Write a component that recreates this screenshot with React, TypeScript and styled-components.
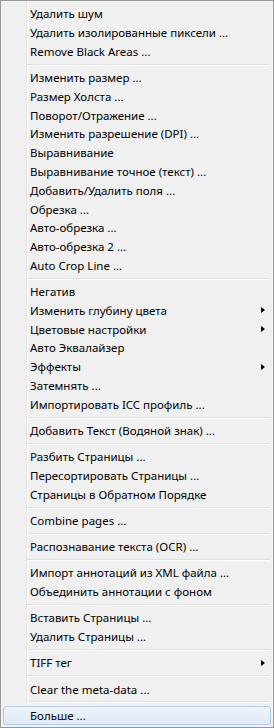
import React from 'react'
import styled, { createGlobalStyle } from 'styled-components'

type Entry = { label: string; submenu?: boolean; active?: boolean }

const groups: Entry[][] = [
  [
    { label: 'Удалить шум' },
    { label: 'Удалить изолированные пиксели ...' },
    { label: 'Remove Black Areas ...' },
  ],
  [
    { label: 'Изменить размер ...' },
    { label: 'Размер Холста ...' },
    { label: 'Поворот/Отражение ...' },
    { label: 'Изменить разрешение (DPI) ...' },
    { label: 'Выравнивание' },
    { label: 'Выравнивание точное (текст) ...' },
    { label: 'Добавить/Удалить поля ...' },
    { label: 'Обрезка ...' },
    { label: 'Авто-обрезка ...' },
    { label: 'Авто-обрезка 2 ...' },
    { label: 'Auto Crop Line ...' },
  ],
  [
    { label: 'Негатив' },
    { label: 'Изменить глубину цвета', submenu: true },
    { label: 'Цветовые настройки', submenu: true },
    { label: 'Авто Эквалайзер' },
    { label: 'Эффекты', submenu: true },
    { label: 'Затемнять ...' },
    { label: 'Импортировать ICC профиль ...' },
  ],
  [{ label: 'Добавить Текст (Водяной знак) ...' }],
  [
    { label: 'Разбить Страницы ...' },
    { label: 'Пересортировать Страницы ...' },
    { label: 'Страницы в Обратном Порядке' },
  ],
  [{ label: 'Combine pages ...' }],
  [{ label: 'Распознавание текста (OCR) ...' }],
  [
    { label: 'Импорт аннотаций из XML файла ...' },
    { label: 'Объединить аннотации с фоном' },
  ],
  [{ label: 'Вставить Страницы ...' }, { label: 'Удалить Страницы ...' }],
  [{ label: 'TIFF тег', submenu: true }],
  [{ label: 'Clear the meta-data ...' }],
  [{ label: 'Больше ...', active: true }],
]

const App: React.FC = () => (
  <>
    <GlobalStyle />
    <Menu>
      {groups.map((group, gi) => (
        <React.Fragment key={gi}>
          {gi > 0 && <Separator />}
          {group.map((item) => (
            <Item key={item.label} $active={item.active}>
              <Label>{item.label}</Label>
              {item.submenu && <Arrow />}
            </Item>
          ))}
        </React.Fragment>
      ))}
    </Menu>
  </>
)

export default App

const GlobalStyle = createGlobalStyle`
  html, body {
    margin: 0;
    padding: 0;
    background: #f0f0f0;
  }
  body {
    font-family: "Noto Sans", "Open Sans", "DejaVu Sans", sans-serif;
  }
`

const Menu = styled.div`
  box-sizing: border-box;
  width: 274px;
  height: 728px;
  display: flex;
  flex-direction: column;
  padding: 3.5px 2px 0.5px;
  border: 1px solid #979797;
  box-shadow: inset 0 0 0 1px #f5f5f5;
  background:
    linear-gradient(
      to right,
      transparent 25px,
      #e2e3e3 25px,
      #e2e3e3 26px,
      #ffffff 26px,
      #ffffff 27px,
      transparent 27px
    ),
    #f0f0f0;
`

const Item = styled.div<{ $active?: boolean }>`
  box-sizing: border-box;
  position: relative;
  height: 18.8px;
  flex: none;
  display: flex;
  align-items: center;
  padding-left: 26px;
  font-size: 11.5px;
  color: #000;
  white-space: nowrap;
  border-radius: 3px;
  border: 1px solid ${(p) => (p.$active ? '#b4cbe6' : 'transparent')};
  background: ${(p) =>
    p.$active ? 'linear-gradient(to bottom, #eef3fa, #e1eaf7)' : 'transparent'};
`

const Label = styled.span`
  flex: 1;
  line-height: 1;
`

const Arrow = styled.span`
  position: absolute;
  right: 5px;
  top: 50%;
  margin-top: -3.5px;
  width: 0;
  height: 0;
  border-top: 3.5px solid transparent;
  border-bottom: 3.5px solid transparent;
  border-left: 4px solid #000;
`

const Separator = styled.div`
  flex: none;
  height: 7.4px;
  display: flex;
  flex-direction: column;
  justify-content: center;
  margin-left: 24px;
  margin-right: 1px;
  &::before {
    content: '';
    display: block;
    height: 1px;
    background: #e0e0e0;
  }
  &::after {
    content: '';
    display: block;
    height: 1px;
    background: #ffffff;
  }
`
